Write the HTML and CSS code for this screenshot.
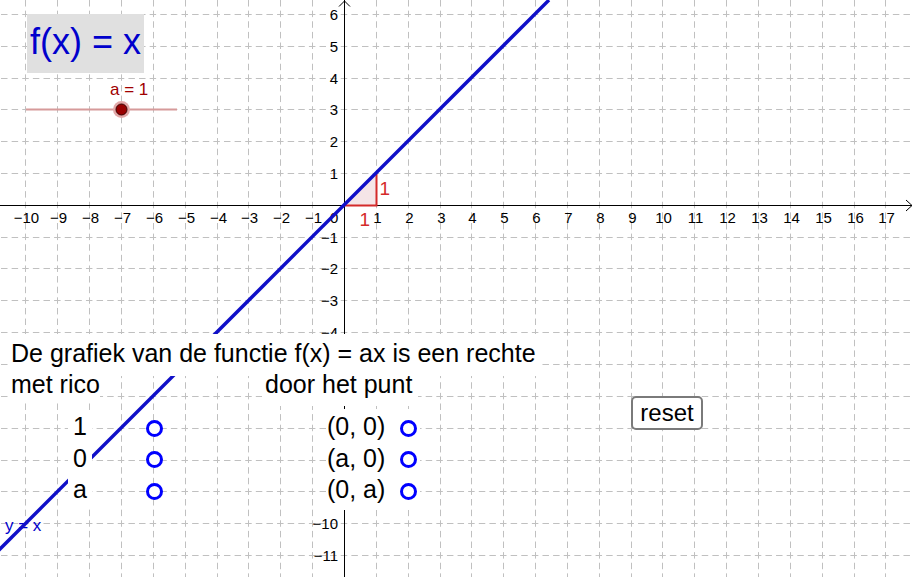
FILE: index.html
```html
<!DOCTYPE html>
<html lang="nl">
<head>
<meta charset="utf-8">
<title>f(x) = ax</title>
<link rel="stylesheet" href="styles.css">
</head>
<body>
<div class="applet">
  <svg class="canvas" width="914" height="577" viewBox="0 0 914 577">
    <defs>
      <clipPath id="above-text"><rect x="0" y="0" width="914" height="334"/></clipPath>
    </defs>
    <path class="grid" d="M-9.6 14.5H914M-9.6 46.5H914M-9.6 78.5H914M-9.6 109.5H914M-9.6 141.5H914M-9.6 173.5H914M-9.6 237.5H914M-9.6 268.5H914M-9.6 300.5H914M-9.6 332.5H914M-9.6 364.5H914M-9.6 396.5H914M-9.6 428.5H914M-9.6 460.5H914M-9.6 491.5H914M-9.6 523.5H914M-9.6 555.5H914"/>
    <path class="grid" d="M25.5 -21.2V577M57.5 -21.2V577M89.5 -21.2V577M121.5 -21.2V577M153.5 -21.2V577M185.5 -21.2V577M217.5 -21.2V577M248.5 -21.2V577M280.5 -21.2V577M312.5 -21.2V577M376.5 -21.2V577M408.5 -21.2V577M440.5 -21.2V577M471.5 -21.2V577M503.5 -21.2V577M535.5 -21.2V577M567.5 -21.2V577M599.5 -21.2V577M631.5 -21.2V577M662.5 -21.2V577M694.5 -21.2V577M726.5 -21.2V577M758.5 -21.2V577M790.5 -21.2V577M822.5 -21.2V577M854.5 -21.2V577M885.5 -21.2V577"/>
    <path class="axis" d="M0 205.5H912M906 200L912 205.5L906 211M344.5 0V577M339 6.5L344.5 1L350 6.5"/>

    <g class="ax xl">
      <text x="26.5" y="223">−10</text><text x="58.5" y="223">−9</text><text x="90.5" y="223">−8</text>
      <text x="122.5" y="223">−7</text><text x="154.5" y="223">−6</text><text x="186.5" y="223">−5</text>
      <text x="218.5" y="223">−4</text><text x="249.5" y="223">−3</text><text x="281.5" y="223">−2</text>
      <text x="313.5" y="223">−1</text>
      <text x="377.5" y="223">1</text><text x="409.5" y="223">2</text><text x="441.5" y="223">3</text>
      <text x="472.5" y="223">4</text><text x="504.5" y="223">5</text><text x="536.5" y="223">6</text>
      <text x="568.5" y="223">7</text><text x="600.5" y="223">8</text><text x="632.5" y="223">9</text>
      <text x="663.5" y="223">10</text><text x="695.5" y="223">11</text><text x="727.5" y="223">12</text>
      <text x="759.5" y="223">13</text><text x="791.5" y="223">14</text><text x="823.5" y="223">15</text>
      <text x="855.5" y="223">16</text><text x="886.5" y="223">17</text>
    </g>
    <g class="ax yl">
      <text x="338" y="20">6</text><text x="338" y="52">5</text><text x="338" y="84">4</text>
      <text x="338" y="115">3</text><text x="338" y="147">2</text><text x="338" y="179">1</text>
      <text x="338" y="243">−1</text><text x="338" y="274">−2</text><text x="338" y="306">−3</text>
      <text x="338" y="338" clip-path="url(#above-text)">−4</text>
      <text x="338" y="529">−10</text><text x="338" y="561">−11</text>
    </g>
    <text class="ax" x="330" y="223">0</text>

    <polygon class="tri-fill" points="344.5,205.5 376.5,205.5 376.5,173.5"/>
    <polyline class="tri-edge" points="344.5,205.5 376.5,205.5 376.5,173.5"/>
    <text class="tri-lbl" x="379.5" y="195">1</text>
    <text class="tri-lbl" x="359.5" y="225.5">1</text>

    <path class="slider-line" d="M26 109.5H177"/>
    <circle class="slider-halo" cx="121.5" cy="109.5" r="8.5"/>
    <circle class="slider-knob" cx="121.5" cy="109.5" r="5.5"/>
    <text class="slider-lbl" x="110" y="95">a = 1</text>

    <text class="line-lbl" x="5" y="531">y = x</text>
    <path class="fline" d="M549 0L-28 577"/>
  </svg>

  <div class="fn-box">f(x) = x</div>

  <div class="q-title">De grafiek van de functie f(x) = ax is een rechte</div>
  <div class="q-sub q-rico">met rico</div>
  <div class="q-sub q-punt">door het punt</div>

  <div class="opts opts-rico">
    <div class="opt"><span class="opt-lbl">1</span><span class="radio"></span></div>
    <div class="opt"><span class="opt-lbl">0</span><span class="radio"></span></div>
    <div class="opt"><span class="opt-lbl">a</span><span class="radio"></span></div>
  </div>

  <div class="opts opts-punt">
    <div class="opt"><span class="opt-lbl">(0, 0)</span><span class="radio"></span></div>
    <div class="opt"><span class="opt-lbl">(a, 0)</span><span class="radio"></span></div>
    <div class="opt"><span class="opt-lbl">(0, a)</span><span class="radio"></span></div>
  </div>

  <button class="reset" type="button">reset</button>
</div>
</body>
</html>
```

FILE: styles.css
```css
html, body {
  margin: 0;
  padding: 0;
  background: #fff;
}

body {
  font-family: "Liberation Sans", Arial, sans-serif;
  color: #000;
}

.applet {
  position: relative;
  width: 914px;
  height: 577px;
  overflow: hidden;
  background: #fff;
}

.canvas {
  position: absolute;
  left: 0;
  top: 0;
  display: block;
}

.grid {
  fill: none;
  stroke: #c0c0c0;
  stroke-width: 1;
  stroke-dasharray: 6.5 4.117;
}

.axis {
  fill: none;
  stroke: #000;
  stroke-width: 1;
}

.ax {
  font-family: "Liberation Sans", Arial, sans-serif;
  font-size: 15px;
  fill: #000;
}

.xl text { text-anchor: middle; }
.yl text { text-anchor: end; }

.tri-fill {
  fill: #f5e5e7;
  stroke: none;
}

.tri-edge {
  fill: none;
  stroke: #d42a2a;
  stroke-width: 2;
}

.tri-lbl {
  font-family: "Liberation Sans", Arial, sans-serif;
  font-size: 19px;
  fill: #d42a2a;
}

.slider-line {
  fill: none;
  stroke: #d69a9a;
  stroke-width: 2;
}

.slider-halo { fill: #e2a8a8; }

.slider-knob {
  fill: #990000;
  stroke: #3a0000;
  stroke-width: 1;
}

.slider-lbl {
  font-family: "Liberation Sans", Arial, sans-serif;
  font-size: 17px;
  fill: #a00000;
}

.line-lbl {
  font-family: "Liberation Sans", Arial, sans-serif;
  font-size: 17px;
  fill: #0000cc;
}

.fline {
  fill: none;
  stroke: #1010c8;
  stroke-width: 3.4;
}

/* objects lying on the canvas */
.fn-box {
  position: absolute;
  left: 27px;
  top: 14px;
  width: 117px;
  height: 59px;
  box-sizing: border-box;
  padding: 6.5px 0 0 3px;
  background: #e0e0e0;
  color: #0000cc;
  font-size: 36px;
  line-height: 41px;
  white-space: nowrap;
}

.q-title,
.q-sub {
  position: absolute;
  background: #fff;
  font-size: 25px;
  line-height: 25px;
  white-space: nowrap;
}

.q-title {
  left: 8px;
  top: 334px;
  padding: 7px 4.5px 10px 3px;
}

.q-rico {
  left: 8px;
  top: 372px;
  padding: 0 0 4px 3px;
}

.q-punt {
  left: 262px;
  top: 372px;
  padding: 0 5.7px 9px 3px;
}

.opts {
  position: absolute;
  display: flex;
  flex-direction: column;
}

.opts-rico {
  left: 68px;
  top: 412.25px;
}

.opts-punt {
  left: 326px;
  top: 409px;
  width: 94px;
  box-sizing: border-box;
  padding: 3.25px 0 3px 1px;
  background: #fff;
}

.opt {
  display: flex;
  align-items: center;
  height: 31.5px;
}

.opts-rico .opt { gap: 53.5px; }
.opts-punt .opt { gap: 14.5px; }

.opt-lbl {
  font-size: 25px;
  line-height: 28px;
  padding-bottom: 3.5px;
  white-space: nowrap;
}

.opts-rico .opt-lbl {
  box-sizing: border-box;
  width: 24px;
  padding-left: 5px;
  background: #fff;
}

.radio {
  flex: none;
  width: 17px;
  height: 17px;
  box-sizing: border-box;
  border: 3px solid #0000ff;
  border-radius: 50%;
  background: #fff;
}

.reset {
  position: absolute;
  left: 631px;
  top: 396px;
  width: 72px;
  height: 34px;
  margin: 0;
  padding: 0;
  box-sizing: border-box;
  border: 2px solid #7a7a7a;
  border-radius: 5px;
  background: #fff;
  color: #000;
  font-family: "Liberation Sans", Arial, sans-serif;
  font-size: 24px;
  line-height: 30px;
}
```
